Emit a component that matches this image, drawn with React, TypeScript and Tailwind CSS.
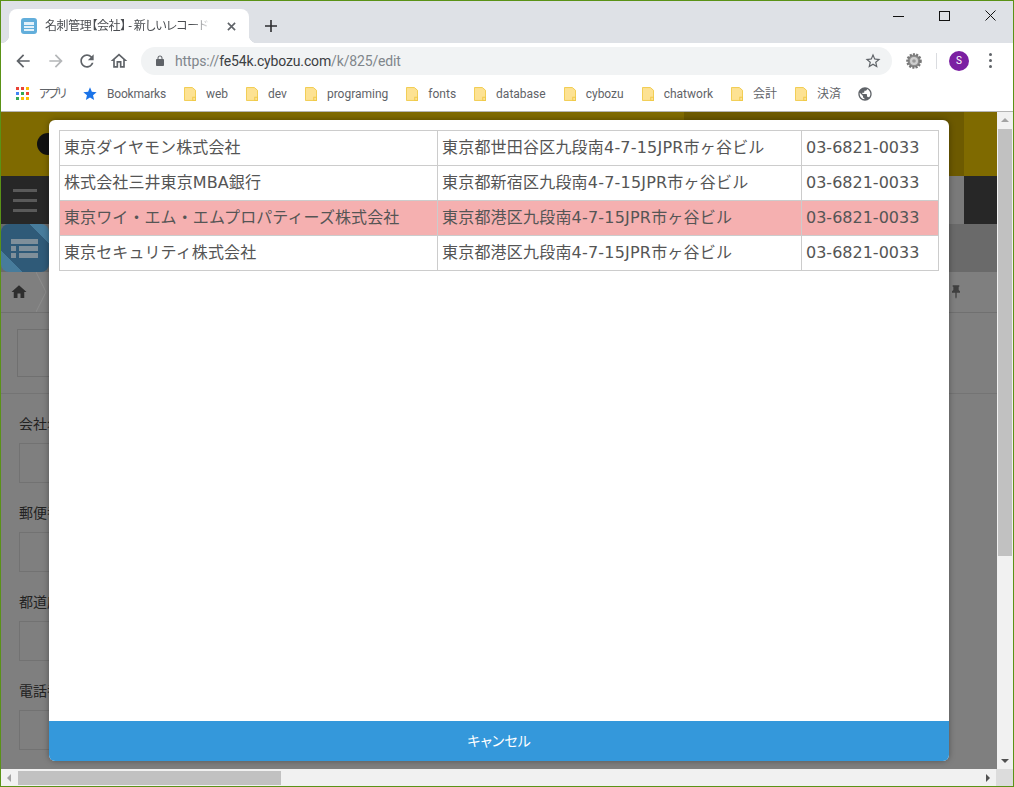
import React from 'react';

const sans = 'font-["Roboto","Noto_Sans_CJK_JP",sans-serif] [font-feature-settings:"palt"]';

const rows = [
    { name: '東京ダイヤモン株式会社', address: '東京都世田谷区九段南4-7-15JPR市ヶ谷ビル', tel: '03-6821-0033' },
    { name: '株式会社三井東京MBA銀行', address: '東京都新宿区九段南4-7-15JPR市ヶ谷ビル', tel: '03-6821-0033' },
    { name: '東京ワイ・エム・エムプロパティーズ株式会社', address: '東京都港区九段南4-7-15JPR市ヶ谷ビル', tel: '03-6821-0033', active: true },
    { name: '東京セキュリティ株式会社', address: '東京都港区九段南4-7-15JPR市ヶ谷ビル', tel: '03-6821-0033' },
];

const bookmarks = ['web', 'dev', 'programing', 'fonts', 'database', 'cybozu', 'chatwork', '会計', '決済'];

const fields = [
    { label: '会社名', cls: 'mt-[20px]' },
    { label: '郵便番号', cls: 'mt-[20px]' },
    { label: '都道府県', cls: 'mt-[20px]' },
    { label: '電話番号', cls: 'mt-[20px]' },
];

const Icon: React.FC<{ d: string; className: string }> = ({ d, className }) => (
    <svg viewBox="0 0 24 24" className={className} fill="currentColor">
        <path d={d} />
    </svg>
);

const FolderIcon: React.FC = () => (
    <svg viewBox="0 0 13 15" className="w-[12px] h-[14px] shrink-0">
        <path d="M.5.5h8.5l3.5 3v11H.5z" fill="#fde293" stroke="#f0c948" />
        <rect x="9.5" y="11" width="3" height="3.5" fill="none" stroke="#f0c948" />
    </svg>
);

const AppsIcon: React.FC = () => (
    <div className="grid grid-cols-3 gap-[2px] w-[13px] shrink-0">
        {['#ea4335', '#ea4335', '#fbbc04', '#4285f4', '#34a853', '#ea4335', '#34a853', '#fbbc04', '#fbbc04'].map((color, i) => (
            <span key={i} className="w-[3px] h-[3px]" style={{ backgroundColor: color }} />
        ))}
    </div>
);

const BrowserChrome: React.FC = () => (
    <div className={`shrink-0 ${sans}`}>
        {/* tab strip */}
        <div className="h-[42px] bg-[#dee1e6] flex items-end relative">
            <div className="relative ml-2 w-[240px] h-[34px] bg-white rounded-t-[8px] flex items-center pl-3">
                <span className="absolute -left-2 bottom-0 w-2 h-2 bg-[radial-gradient(circle_at_0_0,#dee1e6_8px,#ffffff_8.5px)]" />
                <span className="absolute -right-2 bottom-0 w-2 h-2 bg-[radial-gradient(circle_at_100%_0,#dee1e6_8px,#ffffff_8.5px)]" />
                <div className="w-4 h-4 rounded-[3px] bg-[#62aedb] flex flex-col items-center justify-center gap-[1px] shrink-0">
                    <span className="w-[10px] h-[3px] bg-[#e3f1fa]" />
                    <span className="w-[10px] h-[2px] bg-[#e3f1fa]" />
                    <span className="w-[10px] h-[2px] bg-[#e3f1fa]" />
                </div>
                <span className="ml-2 w-[166px] text-xs tracking-[-0.4px] text-[#4a4d51] whitespace-nowrap [mask-image:linear-gradient(to_right,black_88%,transparent)]">名刺管理【会社】 - 新しいレコード</span>
                <svg viewBox="0 0 10 10" className="w-[9px] h-[9px] ml-[16px] text-[#5f6368]" stroke="currentColor" strokeWidth="1.8">
                    <path d="M1 1l8 8M9 1l-8 8" />
                </svg>
            </div>
            <svg viewBox="0 0 12 12" className="w-3 h-3 ml-4 mb-[11px] text-[#2c2d30]" stroke="currentColor" strokeWidth="1.6">
                <path d="M6 0v12M0 6h12" />
            </svg>
            <div className="absolute top-[9px] right-[17px] flex items-center gap-[35px] text-[#111]">
                <span className="w-[11px] h-px bg-current mt-[2px]" />
                <span className="w-[11px] h-[10px] border border-current" />
                <svg viewBox="0 0 11 11" className="w-[11px] h-[11px]" stroke="currentColor" strokeWidth="1">
                    <path d="M.5.5l10 10M10.5.5l-10 10" />
                </svg>
            </div>
        </div>
        {/* toolbar */}
        <div className="h-[35px] bg-white flex items-center pl-[12px] pr-[14px]">
            <Icon d="M20 11H7.83l5.59-5.59L12 4l-8 8 8 8 1.41-1.41L7.83 13H20v-2z" className="w-[20px] h-[20px] text-[#5f6368] shrink-0" />
            <Icon d="M4 11h12.17l-5.59-5.59L12 4l8 8-8 8-1.41-1.41L16.17 13H4v-2z" className="w-[20px] h-[20px] ml-[13px] text-[#b4b6b8] shrink-0" />
            <Icon d="M17.65 6.35C16.2 4.9 14.21 4 12 4c-4.42 0-7.99 3.58-7.99 8s3.57 8 7.99 8c3.73 0 6.84-2.55 7.73-6h-2.08c-.82 2.33-3.04 4-5.65 4-3.31 0-6-2.69-6-6s2.69-6 6-6c1.66 0 3.14.69 4.22 1.78L13 11h7V4l-2.35 2.35z" className="w-[20px] h-[20px] ml-[11px] text-[#5f6368] shrink-0" />
            <Icon d="M12 5.69l5 4.5V18h-2v-6H9v6H7v-7.81l5-4.5M12 3L2 12h3v8h6v-6h2v6h6v-8h3L12 3z" className="w-[20px] h-[20px] ml-[12px] text-[#5f6368] shrink-0" />
            <div className="ml-[12px] w-[751px] h-[28px] rounded-full bg-[#f1f3f4] flex items-center pl-[13px] pr-[10px] shrink-0">
                <Icon d="M18 8h-1V6c0-2.76-2.24-5-5-5S7 3.24 7 6v2H6c-1.1 0-2 .9-2 2v10c0 1.1.9 2 2 2h12c1.1 0 2-.9 2-2V10c0-1.1-.9-2-2-2zM9 6c0-1.66 1.34-3 3-3s3 1.34 3 3v2H9V6z" className="w-[12px] h-[12px] text-[#5f6368]" />
                <span className="ml-[9px] pt-[1px] text-[14px] tracking-[-0.15px] text-[#80868b] whitespace-nowrap">
                    https://<span className="text-[#3c4043]">fe54k.cybozu.com</span>/k/825/edit
                </span>
                <Icon d="M22 9.24l-7.19-.62L12 2 9.19 8.63 2 9.24l5.46 4.73L5.82 21 12 17.27 18.18 21l-1.63-7.03L22 9.24zM12 15.4l-3.76 2.27 1-4.28-3.32-2.88 4.38-.38L12 6.1l1.71 4.04 4.38.38-3.32 2.88 1 4.28L12 15.4z" className="w-[18px] h-[18px] ml-auto text-[#5f6368]" />
            </div>
            <svg viewBox="0 0 16 16" className="w-4 h-4 ml-[14px] shrink-0">
                <circle cx="8" cy="8" r="6.5" fill="#8d8d8d" stroke="#777" strokeWidth="2.6" strokeDasharray="2 1.2" />
                <circle cx="8" cy="8" r="4" fill="#cfcfcf" />
                <circle cx="8" cy="8" r="1.8" fill="#9a9a9a" />
            </svg>
            <span className="w-px h-4 ml-[14px] bg-[#dadce0]" />
            <span className="w-5 h-5 ml-[12px] rounded-full bg-[#7b1fa2] text-white text-[10px] flex items-center justify-center shrink-0">S</span>
            <div className="ml-[20px] flex flex-col gap-[3px]">
                <span className="w-[3px] h-[3px] rounded-full bg-[#5f6368]" />
                <span className="w-[3px] h-[3px] rounded-full bg-[#5f6368]" />
                <span className="w-[3px] h-[3px] rounded-full bg-[#5f6368]" />
            </div>
        </div>
        {/* bookmarks */}
        <div className="h-[34px] pb-[2px] bg-white border-b border-[#b5b5b5] flex items-center pl-[15px] text-xs text-[#5f6368]">
            <AppsIcon />
            <span className="ml-[10px] tracking-[-2px] whitespace-nowrap">アプリ</span>
            <Icon d="M12 17.27L18.18 21l-1.64-7.03L22 9.24l-7.19-.61L12 2 9.19 8.63 2 9.24l5.46 4.73L5.82 21z" className="w-4 h-4 ml-[17px] text-[#1a73e8] shrink-0" />
            <span className="ml-[9px] tracking-[-0.2px]">Bookmarks</span>
            <div className="ml-[18px] flex items-center gap-[18px]">
                {bookmarks.map((name) => (
                    <div key={name} className="flex items-center gap-[10px]">
                        <FolderIcon />
                        <span className="whitespace-nowrap">{name}</span>
                    </div>
                ))}
            </div>
            <Icon d="M12 2C6.48 2 2 6.48 2 12s4.48 10 10 10 10-4.48 10-10S17.52 2 12 2zm-1 17.93c-3.95-.49-7-3.85-7-7.93 0-.62.08-1.21.21-1.79L9 15v1c0 1.1.9 2 2 2v1.93zm6.9-2.54c-.26-.81-1-1.39-1.9-1.39h-1v-3c0-.55-.45-1-1-1H8v-2h2c.55 0 1-.45 1-1V7h2c1.1 0 2-.9 2-2v-.41c2.93 1.19 5 4.06 5 7.41 0 2.08-.8 3.97-2.1 5.39z" className="w-[16px] h-[16px] ml-[16px] text-[#5f6368] shrink-0" />
        </div>
    </div>
);

// the kintone page behind the dialog, already dimmed by the overlay
const DimmedPage: React.FC = () => (
    <div className="flex-1 min-w-0 bg-[#7f7f7f] overflow-hidden flex flex-col">
        <div className="h-[64px] shrink-0 bg-[#7f6a00] flex items-stretch">
            <div className="flex-1 pl-[36px] pt-[21px]">
                <div className="w-[22px] h-[22px] rounded-full bg-[#111]" />
            </div>
            <div className="w-[280px] bg-[#6d5a00] shrink-0" />
            <div className="w-[33px] shrink-0" />
        </div>
        <div className="h-[48px] shrink-0 flex">
            <div className="w-[48px] bg-[#272727] flex flex-col items-center justify-center gap-[7px]">
                <span className="w-6 h-[3px] bg-[#5a5a5a]" />
                <span className="w-6 h-[3px] bg-[#5a5a5a]" />
                <span className="w-6 h-[3px] bg-[#5a5a5a]" />
            </div>
            <div className="flex-1 bg-[#7a7a7a]" />
            <div className="w-[33px] bg-[#272727]" />
        </div>
        <div className="h-[48px] shrink-0 bg-[#6a6a6a]">
            <div className="w-[48px] h-full rounded-[8px] bg-[linear-gradient(45deg,#477c9c_22%,#2f5a78_22%,#2f5a78_80%,#477c9c_80%)] flex flex-col justify-center gap-[2px] pl-[10px]">
                <span className="w-[27px] h-[5px] bg-[#7f8f9a]" />
                <div className="flex gap-[3px]">
                    <span className="w-[5px] h-[5px] bg-[#7f8f9a]" />
                    <span className="w-[19px] h-[5px] bg-[#7f8f9a]" />
                </div>
                <div className="flex gap-[3px]">
                    <span className="w-[5px] h-[5px] bg-[#7f8f9a]" />
                    <span className="w-[19px] h-[5px] bg-[#7f8f9a]" />
                </div>
            </div>
        </div>
        <div className="h-[41px] shrink-0 border-b border-[#707070] flex items-center pl-[9px] pr-[33px]">
            <Icon d="M10 20v-6h4v6h5v-8h3L12 3 2 12h3v8z" className="w-[18px] h-[18px] text-[#2e2e2e]" />
            <svg viewBox="0 0 11 40" className="w-[11px] h-[40px] ml-[8px] text-[#8c8c8c]" fill="none" stroke="currentColor">
                <path d="M0 0l10 20L0 40" />
            </svg>
            <Icon d="M16 9V4h1V2H7v2h1v5l-2 2v2h5v7l1 2 1-2v-7h5v-2z" className="w-[16px] h-[18px] ml-auto text-[#404040]" />
        </div>
        <div className="h-[81px] shrink-0 border-b border-[#747474] pl-[16px] pt-[16px]">
            <div className="w-[120px] h-[48px] border border-[#707070]" />
        </div>
        <div className={`pl-[18px] text-sm text-[#222] ${sans}`}>
            {fields.map((field) => (
                <div key={field.label} className={field.cls}>
                    <div className="leading-[20px] whitespace-nowrap">{field.label}</div>
                    <div className="mt-[9px] w-[120px] h-[40px] border border-[#727272]" />
                </div>
            ))}
        </div>
    </div>
);

const VerticalScrollbar: React.FC = () => (
    <div className="w-[16px] shrink-0 bg-[#f1f1f1] flex flex-col items-center">
        <span className="mt-[6px] w-0 h-0 border-x-[4px] border-x-transparent border-b-[4px] border-b-[#a3a3a3]" />
        <div className="mt-[7px] w-[14px] h-[427px] bg-[#c1c1c1]" />
        <span className="mt-auto mb-[6px] w-0 h-0 border-x-[4px] border-x-transparent border-t-[4px] border-t-[#505050]" />
    </div>
);

const HorizontalScrollbar: React.FC = () => (
    <div className="h-[17px] shrink-0 bg-[#f1f1f1] flex items-center">
        <span className="ml-[6px] w-0 h-0 border-y-[4px] border-y-transparent border-r-[4px] border-r-[#a3a3a3]" />
        <div className="ml-[7px] w-[263px] h-[14px] bg-[#c1c1c1]" />
        <span className="ml-auto mr-[6px] w-0 h-0 border-y-[4px] border-y-transparent border-l-[4px] border-l-[#505050]" />
        <div className="w-[17px] h-full bg-[#dcdcdc]" />
    </div>
);

const CompanyDialog: React.FC = () => (
    <div className="absolute left-[48px] top-[8px] w-[900px] h-[641px] bg-white rounded-[6px] overflow-hidden shadow-[0_0_6px_rgba(0,0,0,0.35)] flex flex-col">
        <div className="flex-1 p-[10px]">
            <table className='w-[879px] table-fixed border-collapse text-base text-[#555] font-["DejaVu_Sans","Noto_Sans_CJK_JP",sans-serif]'>
                <colgroup>
                    <col className="w-[378px]" />
                    <col className="w-[364px]" />
                    <col className="w-[137px]" />
                </colgroup>
                <tbody>
                    {rows.map((row) => (
                        <tr key={row.name} className={`h-[35px] ${row.active ? 'bg-[#f5b0b0]' : ''}`}>
                            <td className="border border-[#ccc] px-[4px] tracking-[0.1px] whitespace-nowrap">{row.name}</td>
                            <td className="border border-[#ccc] px-[4px] tracking-[0.2px] whitespace-nowrap">{row.address}</td>
                            <td className="border border-[#ccc] px-[4px] whitespace-nowrap">{row.tel}</td>
                        </tr>
                    ))}
                </tbody>
            </table>
        </div>
        <button className={`h-[40px] shrink-0 pb-[1px] bg-[#3498db] text-white text-sm ${sans}`}>キャンセル</button>
    </div>
);

const App: React.FC = () => (
    <div className="w-[1014px] h-[787px] border border-[#5a9216] flex flex-col overflow-hidden bg-white">
        <BrowserChrome />
        <div className="flex-1 min-h-0 flex flex-col">
            <div className="relative flex-1 min-h-0 flex">
                <DimmedPage />
                <VerticalScrollbar />
                <CompanyDialog />
            </div>
            <HorizontalScrollbar />
        </div>
    </div>
);

export default App;
